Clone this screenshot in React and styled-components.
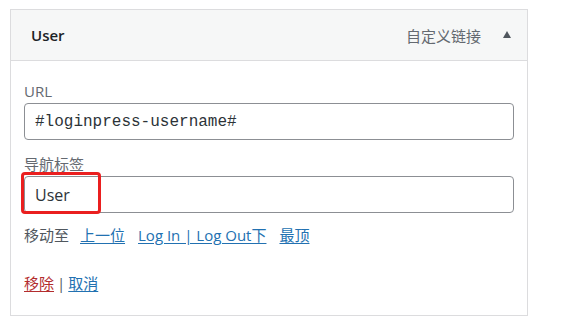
import React from "react";
import styled, { createGlobalStyle } from "styled-components";

const Global = createGlobalStyle`
  html, body { margin: 0; padding: 0; background: #fff; }
  body { font-family: "Open Sans", "Noto Sans CJK SC", sans-serif; color: #2c3338; }
`;

const Page = styled.div`
  padding: 9px 0 0 10px;
`;

const Panel = styled.div`
  width: 518px;
  box-sizing: border-box;
  border: 1px solid #dcdcde;
  background: #fff;
`;

const Header = styled.div`
  height: 50px;
  display: flex;
  align-items: center;
  padding: 0 16px 0 20px;
  background: #f6f7f7;
  border-bottom: 1px solid #dcdcde;
`;

const Title = styled.div`
  flex: 1;
  font-size: 15px;
  font-weight: 600;
  color: #1d2327;
`;

const Type = styled.div`
  font-size: 15px;
  color: #646970;
  margin-right: 22px;
`;

const Arrow = styled.div`
  width: 0;
  height: 0;
  border-left: 4.5px solid transparent;
  border-right: 4.5px solid transparent;
  border-bottom: 7px solid #50575e;
  margin-bottom: 2px;
`;

const Body = styled.div`
  padding: 21px 13px 22px 13px;
  display: flex;
  flex-direction: column;
`;

const Label = styled.label`
  display: block;
  font-size: 15px;
  line-height: 18px;
  color: #646970;
  margin-top: ${(p) => p.$mt || 0}px;
  margin-bottom: 3px;
`;

const Field = styled.div`
  position: relative;
`;

const Input = styled.div`
  box-sizing: border-box;
  height: 37px;
  width: 100%;
  border: 1px solid #8c8f94;
  border-radius: 4px;
  padding: 0 10px;
  display: flex;
  align-items: center;
  font-size: 16px;
  font-family: ${(p) =>
    p.$mono
      ? '"Liberation Mono", "DejaVu Sans Mono", monospace'
      : '"Open Sans", "Noto Sans CJK SC", sans-serif'};
  color: #2c3338;
  background: #fff;
`;

const Highlight = styled.div`
  position: absolute;
  left: -3px;
  top: -4px;
  width: 80px;
  height: 42px;
  box-sizing: border-box;
  border: 3px solid #ea1f1f;
  border-radius: 4px;
  pointer-events: none;
`;

const Row = styled.div`
  display: flex;
  align-items: center;
  font-size: 15px;
  line-height: 20px;
  margin-top: ${(p) => p.$mt}px;
  color: #50575e;
`;

const Link = styled.a`
  color: ${(p) => (p.$danger ? "#b32d2e" : "#2271b1")};
  text-decoration: underline;
  text-underline-offset: 2px;
  margin-left: ${(p) => p.$ml || 0}px;
`;

const Sep = styled.span`
  color: #50575e;
  margin: 0 3px;
`;

export default function App() {
  return (
    <>
      <Global />
      <Page>
        <Panel>
          <Header>
            <Title>User</Title>
            <Type>自定义链接</Type>
            <Arrow />
          </Header>
          <Body>
            <Label>URL</Label>
            <Input $mono>#loginpress-username#</Input>
            <Label $mt={15}>导航标签</Label>
            <Field>
              <Input>User</Input>
              <Highlight />
            </Field>
            <Row $mt={12}>
              移动至
              <Link $ml={11}>上一位</Link>
              <Link $ml={13}>Log In | Log Out下</Link>
              <Link $ml={13}>最顶</Link>
            </Row>
            <Row $mt={28}>
              <Link $danger>移除</Link>
              <Sep>|</Sep>
              <Link>取消</Link>
            </Row>
          </Body>
        </Panel>
      </Page>
    </>
  );
}
